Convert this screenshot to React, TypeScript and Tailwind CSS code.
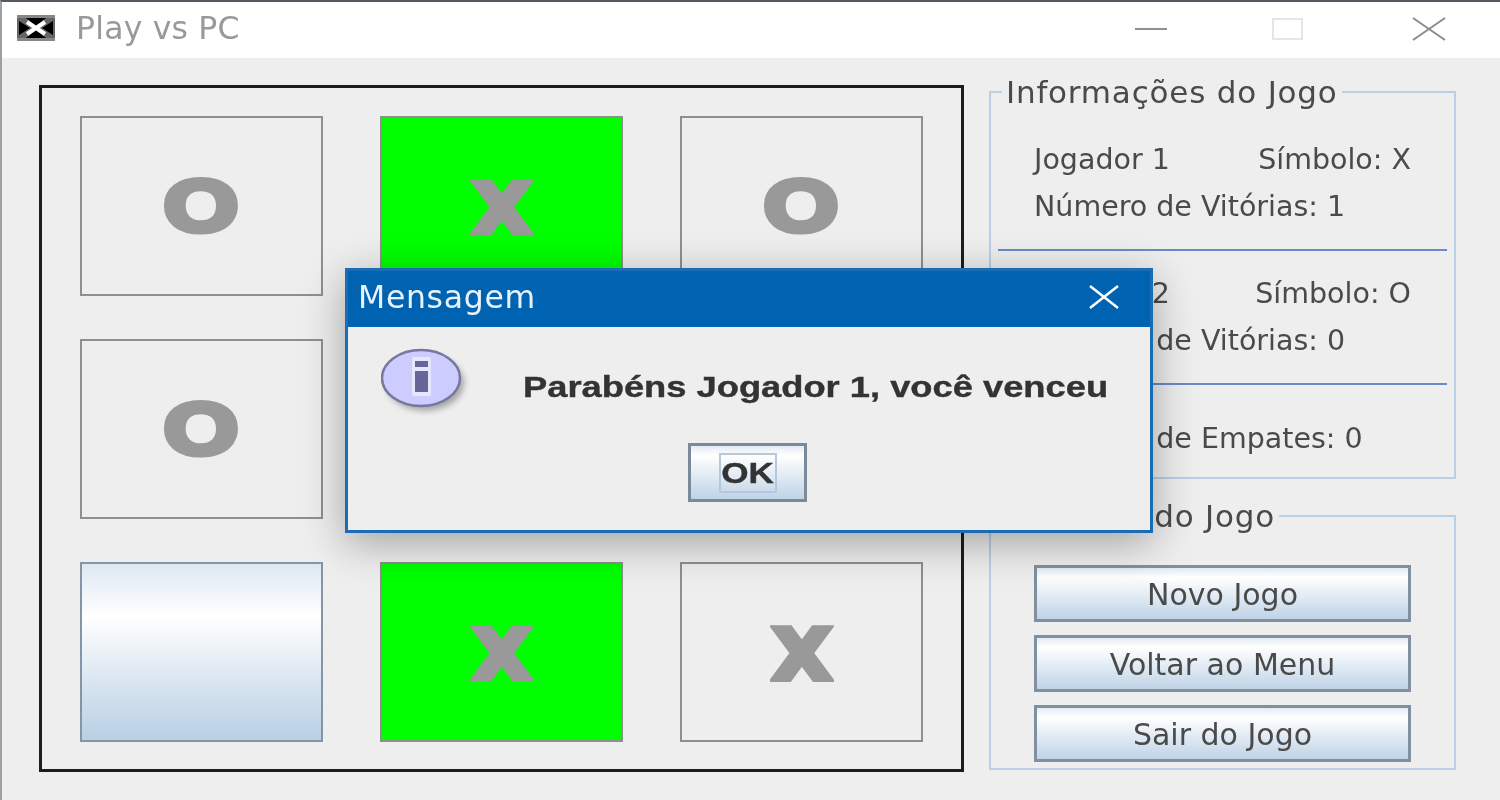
const sans = "font-['DejaVu_Sans',sans-serif]";
const arial = "font-['Liberation_Sans',sans-serif]";

function Cell({ mark, variant = "plain" }: { mark?: "O" | "X"; variant?: "plain" | "green" | "hover" }) {
  const bg =
    variant === "green"
      ? "bg-[#00ff00] border-[#8f8f8f]"
      : variant === "hover"
        ? "bg-gradient-to-b from-[#dde8f2] via-[#ffffff] via-[30%] to-[#b9cfe4] border-[#8395a7]"
        : "bg-[#eeeeee] border-[#8f8f8f]";
  const glyph =
    mark === "O"
      ? `${arial} scale-x-[1.32] text-[72px] [-webkit-text-stroke:6px_#999999]`
      : `${sans} scale-x-[1.08] text-[70px] mt-[5px] [-webkit-text-stroke:6px_#999999]`;
  return (
    <div className={`h-[180px] border-2 flex items-center justify-center ${bg}`}>
      {mark && <span className={`${glyph} font-bold leading-none text-[#999999]`}>{mark}</span>}
    </div>
  );
}

function Label({ children }: { children: React.ReactNode }) {
  return <span className={`${sans} text-[28.5px] leading-[34px] text-[#4a4a4a] whitespace-nowrap`}>{children}</span>;
}

function SideButton({ children }: { children: React.ReactNode }) {
  return (
    <div className="h-[57px] pt-[2px] border-[3px] border-[#8090a0] bg-gradient-to-b from-[#e2ebf4] via-[#ffffff] via-[18%] to-[#bfd3e7] flex items-center justify-center">
      <span className={`${sans} text-[30px] leading-[34px] text-[#4a4a4a] whitespace-nowrap`}>{children}</span>
    </div>
  );
}

function Group({ title, children, className }: { title: string; children: React.ReactNode; className: string }) {
  return (
    <fieldset className={`border-2 border-[#b8cfe6] pl-[7px] pr-[7px] min-w-0 ${className}`}>
      <legend className={`${sans} ml-[4px] px-[4px] text-[31px] tracking-[0.8px] leading-[34px] text-[#4a4a4a] whitespace-nowrap`}>{title}</legend>
      {children}
    </fieldset>
  );
}

function InfoIcon() {
  return (
    <svg width="90" height="70" viewBox="0 0 90 70" className="shrink-0">
      <ellipse cx="44" cy="35" rx="39" ry="28" fill="#000" opacity="0.3" className="blur-[3px]" />
      <ellipse cx="40" cy="30" rx="39" ry="28" fill="#ccccff" stroke="#77779f" strokeWidth="2.5" />
      <rect x="31" y="9" width="19" height="39" rx="2" fill="#e6e6ff" />
      <rect x="34" y="13" width="13" height="6" fill="#666699" />
      <rect x="34" y="23" width="13" height="21" fill="#666699" />
    </svg>
  );
}

export default function App() {
  return (
    <div className="relative w-[1500px] h-[800px] overflow-hidden bg-[#eeeeee] border-t-2 border-l-2 border-t-[#555b62] border-l-[#9aa0a6] blur-[0.6px]">
      <header className="h-[56px] bg-white flex items-center pl-[15px] pr-[54px]">
        <svg width="38" height="26" viewBox="0 0 38 26" className="mt-[-4px]">
          <rect width="38" height="26" fill="#888888" />
          <rect y="3" width="38" height="20" fill="#666666" />
          <path d="M9 3 H29 L19 11 Z M9 23 H29 L19 15 Z M2 6 L13 13 L2 20 Z M36 6 L25 13 L36 20 Z" fill="#000000" />
          <path d="M10 7 L28 19 M28 7 L10 19" stroke="#ffffff" strokeWidth="4" />
        </svg>
        <span className={`${sans} ml-[21px] mt-[-3px] text-[31.5px] tracking-[0.2px] text-[#999999]`}>Play vs PC</span>
        <div className="ml-auto mt-[-2px] flex items-center gap-[105px]">
          <div className="w-[32px] h-[2px] bg-[#909090]" />
          <div className="w-[31px] h-[22px] border-2 border-[#e6e6e6]" />
          <svg width="34" height="24" viewBox="0 0 34 24" className="ml-[4px]">
            <path d="M1 1 L33 23 M33 1 L1 23" stroke="#8c8c8c" strokeWidth="2" />
          </svg>
        </div>
      </header>

      <main className="flex pl-[37px] pt-[27px] gap-[25px]">
        <div className="w-[925px] h-[687px] border-[3px] border-[#1c1c1c] pl-[38px] pt-[28px]">
          <div className="grid grid-cols-[243px_243px_243px] gap-x-[57px] gap-y-[43px]">
            <Cell mark="O" />
            <Cell mark="X" variant="green" />
            <Cell mark="O" />
            <Cell mark="O" />
            <Cell />
            <Cell />
            <Cell variant="hover" />
            <Cell mark="X" variant="green" />
            <Cell mark="X" />
          </div>
        </div>

        <aside className="w-[467px] mt-[-10px] flex flex-col">
          <Group title="Informações do Jogo" className="h-[404px]">
            <div className="pl-[36px] pr-[36px] pt-[34px]">
              <div className="flex justify-between"><Label>Jogador 1</Label><Label>Símbolo: X</Label></div>
              <div className="mt-[13px]"><Label>Número de Vitórias: 1</Label></div>
            </div>
            <div className="mt-[25px] h-[2px] bg-[#6d8ac8]" />
            <div className="pl-[36px] pr-[36px] pt-[26px]">
              <div className="flex justify-between"><Label>Jogador 2</Label><Label>Símbolo: O</Label></div>
              <div className="mt-[13px]"><Label>Número de Vitórias: 0</Label></div>
            </div>
            <div className="mt-[25px] h-[2px] bg-[#6d8ac8]" />
            <div className="pl-[36px] pt-[37px]"><Label>Número de Empates: 0</Label></div>
          </Group>
          <Group title="Controle do Jogo" className="h-[271px] mt-[20px]">
            <div className="pl-[36px] pr-[36px] pt-[32px] flex flex-col gap-[13px]">
              <SideButton>Novo Jogo</SideButton>
              <SideButton>Voltar ao Menu</SideButton>
              <SideButton>Sair do Jogo</SideButton>
            </div>
          </Group>
        </aside>
      </main>

      <div className="absolute left-[343px] top-[266px] w-[808px] h-[265px] border-[3px] border-[#1a6db5] bg-[#eeeeee] shadow-[0_10px_40px_rgba(0,0,0,0.32)] flex flex-col">
        <div className="h-[56px] shrink-0 bg-[#0063b1] flex items-center justify-between pl-[10px] pr-[30px] pb-[4px]">
          <span className={`${sans} text-[31.5px] tracking-[0.7px] leading-[40px] text-[#e8f2fb]`}>Mensagem</span>
          <svg width="32" height="24" viewBox="0 0 32 24">
            <path d="M2 1 L30 23 M30 1 L2 23" stroke="#ffffff" strokeWidth="2.5" />
          </svg>
        </div>
        <div className="flex pl-[33px] pt-[21px]">
          <InfoIcon />
          <span className={`ml-[52px] mt-[21px] ${arial} origin-left scale-x-[1.21] font-bold text-[30px] leading-[36px] text-[#333333] [-webkit-text-stroke:0.4px_#333333] whitespace-nowrap`}>
            Parabéns Jogador 1, você venceu
          </span>
        </div>
        <div className="absolute left-[340px] top-[172px] w-[119px] h-[59px] border-[3px] border-[#7a8a99] bg-gradient-to-b from-[#e2ebf4] via-[#ffffff] via-[18%] to-[#bfd3e7] flex items-center justify-center">
          <span className="w-[58px] h-[40px] border-2 border-[#b5c8dc] flex items-center justify-center">
            <span className={`${arial} scale-x-[1.17] font-bold text-[30px] leading-[36px] text-[#333333] [-webkit-text-stroke:0.4px_#333333]`}>OK</span>
          </span>
        </div>
      </div>
    </div>
  );
}
